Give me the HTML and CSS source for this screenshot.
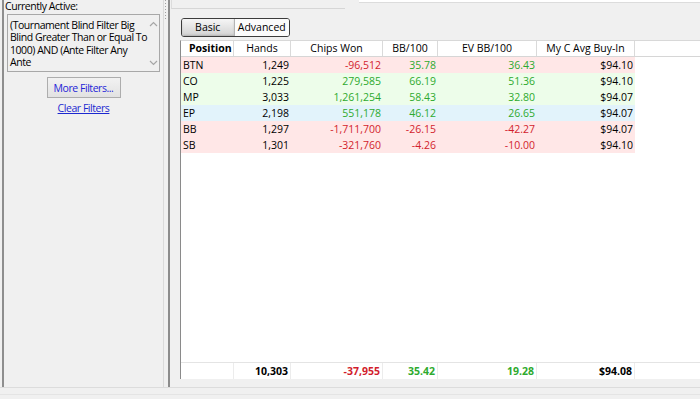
FILE: index.html
```html
<!DOCTYPE html>
<html lang="en">
<head>
<meta charset="UTF-8">
<title>Position Report</title>
<link rel="stylesheet" href="styles.css">
</head>
<body>
<div class="window">
    <div class="filters">
        <div class="label">Currently Active:</div>
        <div class="active-box">
            <div class="active-text">(Tournament Blind Filter Big<br>Blind Greater Than or Equal To<br>1000) AND (Ante Filter Any<br>Ante</div>
            <div class="vscroll">
                <svg width="9" height="6" viewBox="0 0 9 6"><path d="M1 5 L4.5 1.5 L8 5" fill="none" stroke="#a6a6a6" stroke-width="1.2"/></svg>
                <svg width="9" height="6" viewBox="0 0 9 6"><path d="M1 1 L4.5 4.5 L8 1" fill="none" stroke="#a6a6a6" stroke-width="1.2"/></svg>
            </div>
        </div>
        <button class="more">More Filters...</button>
        <a class="clear" href="#">Clear Filters</a>
    </div>
    <div class="grip"><div class="dots"></div></div>
    <div class="main">
        <div class="topbar">
            <div class="topbox"></div>
            <div class="topwhite"></div>
        </div>
        <div class="toggle">
            <span class="seg on">Basic</span>
            <span class="seg">Advanced</span>
        </div>
        <div class="grid">
            <div class="row head">
                <div class="c first"><b>Position</b><span class="sort"></span></div>
                <div class="c">Hands</div>
                <div class="c">Chips Won</div>
                <div class="c">BB/100</div>
                <div class="c">EV BB/100</div>
                <div class="c">My C Avg Buy-In</div>
                <div class="c rest"></div>
            </div>
            <div class="row loss">
                <div class="c first">BTN</div><div class="c">1,249</div><div class="c neg">-96,512</div><div class="c pos">35.78</div><div class="c pos">36.43</div><div class="c">$94.10</div><div class="c rest"></div>
            </div>
            <div class="row win">
                <div class="c first">CO</div><div class="c">1,225</div><div class="c pos">279,585</div><div class="c pos">66.19</div><div class="c pos">51.36</div><div class="c">$94.10</div><div class="c rest"></div>
            </div>
            <div class="row win">
                <div class="c first">MP</div><div class="c">3,033</div><div class="c pos">1,261,254</div><div class="c pos">58.43</div><div class="c pos">32.80</div><div class="c">$94.07</div><div class="c rest"></div>
            </div>
            <div class="row early">
                <div class="c first">EP</div><div class="c">2,198</div><div class="c pos">551,178</div><div class="c pos">46.12</div><div class="c pos">26.65</div><div class="c">$94.07</div><div class="c rest"></div>
            </div>
            <div class="row loss">
                <div class="c first">BB</div><div class="c">1,297</div><div class="c neg">-1,711,700</div><div class="c neg">-26.15</div><div class="c neg">-42.27</div><div class="c">$94.07</div><div class="c rest"></div>
            </div>
            <div class="row loss">
                <div class="c first">SB</div><div class="c">1,301</div><div class="c neg">-321,760</div><div class="c neg">-4.26</div><div class="c neg">-10.00</div><div class="c">$94.10</div><div class="c rest"></div>
            </div>
            <div class="filler"></div>
            <div class="row total">
                <div class="c first"></div><div class="c">10,303</div><div class="c neg">-37,955</div><div class="c pos">35.42</div><div class="c pos">19.28</div><div class="c">$94.08</div><div class="c rest"></div>
            </div>
        </div>
    </div>
</div>
<div class="status"></div>
</body>
</html>
```

FILE: styles.css
```css
body {
  margin: 0;
  width: 700px;
  height: 399px;
  overflow: hidden;
  background-color: #f0f0f0;
  color: #000;
  font-family: 'Open Sans', 'Noto Sans', sans-serif;
  font-size: 10.5px;
}

.window {
  display: flex;
  height: 387px;
  border-bottom: 1px solid #dcdcdc;
}

/* left filter panel */
.filters {
  margin-left: 2px;
  width: 159px;
  border-left: 2px solid #8e8e8e;
  border-right: 1px solid #dadada;
  display: flex;
  flex-direction: column;
  align-items: center;
  letter-spacing: -0.45px;
}

.label {
  align-self: flex-start;
  padding-left: 1px;
  line-height: 13px;
}

.active-box {
  align-self: flex-start;
  margin: 1px 0 0 3px;
  width: 153px;
  height: 58px;
  box-sizing: border-box;
  border: 1px solid #a8a8a8;
  background-color: #f0f0f0;
  display: flex;
}

.active-text {
  flex: 1;
  padding: 4px 0 0 2px;
  line-height: 12.3px;
  white-space: nowrap;
}

.vscroll {
  width: 16px;
  display: flex;
  flex-direction: column;
  justify-content: space-between;
  align-items: center;
  padding: 6px 0 5px;
}

.more {
  margin-top: 5px;
  width: 74px;
  height: 21px;
  padding: 0;
  border: 1px solid #adadad;
  background: linear-gradient(#f2f2f2, #e2e2e2);
  color: #2424d8;
  font-family: inherit;
  font-size: 10.5px;
  letter-spacing: -0.45px;
}

.clear {
  margin-top: 3px;
  color: #1c28d0;
  line-height: 14px;
}

/* splitter */
.grip {
  width: 4px;
}

.dots {
  margin: 0 0 0 1px;
  width: 1px;
  height: 21px;
  background: repeating-linear-gradient(#a0a0a0 0 1px, transparent 1px 3px);
}

.main {
  flex: 1;
  border-left: 2px solid #8c8c8c;
  display: flex;
  flex-direction: column;
}

.topbar {
  display: flex;
  height: 9px;
}

.topbox {
  margin-left: 1px;
  width: 173px;
  height: 8px;
  border-left: 1px solid #dcdcdc;
  border-bottom: 1px solid #d6d6d6;
}

.topwhite {
  flex: 1;
  margin-left: 14px;
  height: 2px;
  background-color: #fff;
  border-bottom: 1px solid #dcdcdc;
}

/* basic / advanced switch */
.toggle {
  margin: 9px 0 0 11px;
  width: 109px;
  height: 19px;
  box-sizing: border-box;
  border: 1px solid #3c3c3c;
  border-radius: 3px;
  display: flex;
  overflow: hidden;
}

.seg {
  width: 55px;
  text-align: center;
  line-height: 17px;
  background-color: #fbfbfb;
}

.seg.on {
  width: 52px;
  border-right: 1px solid #b4b4b4;
  background: linear-gradient(#f6f6f6, #d2d2d2);
  box-shadow: inset 0 -1px 2px rgba(0, 0, 0, 0.15);
}

/* data grid */
.grid {
  flex: 1;
  margin: 3px 0 8px 10px;
  background-color: #fff;
  border-left: 1px solid #8a8a8a;
  border-top: 1px solid #d8d8d8;
  display: flex;
  flex-direction: column;
}

.row {
  display: grid;
  grid-template-columns: 53px 57px 92px 55px 99px 98px 1fr;
  height: 16px;
  line-height: 16px;
}

.c {
  padding: 0 2px;
  text-align: right;
  white-space: nowrap;
  overflow: hidden;
}

.c.first {
  text-align: left;
}

.row.head {
  height: 15px;
  line-height: 15px;
  border-bottom: 1px solid #d6d6d6;
}

.head .c {
  text-align: center;
  border-right: 1px solid #dadada;
}

.head .c.first {
  text-align: left;
  padding-left: 8px;
}

.head .c.rest {
  border-right: none;
}

.sort {
  display: inline-block;
  margin-left: 1px;
  border-left: 3px solid transparent;
  border-right: 3px solid transparent;
  border-top: 3px solid #7a7a7a;
  vertical-align: middle;
}

.loss .c {
  background-color: #ffe7e7;
}

.win .c {
  background-color: #edfdea;
}

.early .c {
  background-color: #e2f3fb;
}

.row .c.rest {
  background-color: #fff;
}

.neg {
  color: #d21d2c;
}

.pos {
  color: #2eaa2e;
}

.filler {
  flex: 1;
}

.row.total {
  border-top: 1px solid #e4e4e4;
  font-weight: bold;
}

.total .c {
  border-right: 1px solid #ececec;
}

.total .c.rest {
  border-right: none;
}

.status {
  margin-top: 6px;
  border-top: 1px solid #e4e4e4;
}
```
